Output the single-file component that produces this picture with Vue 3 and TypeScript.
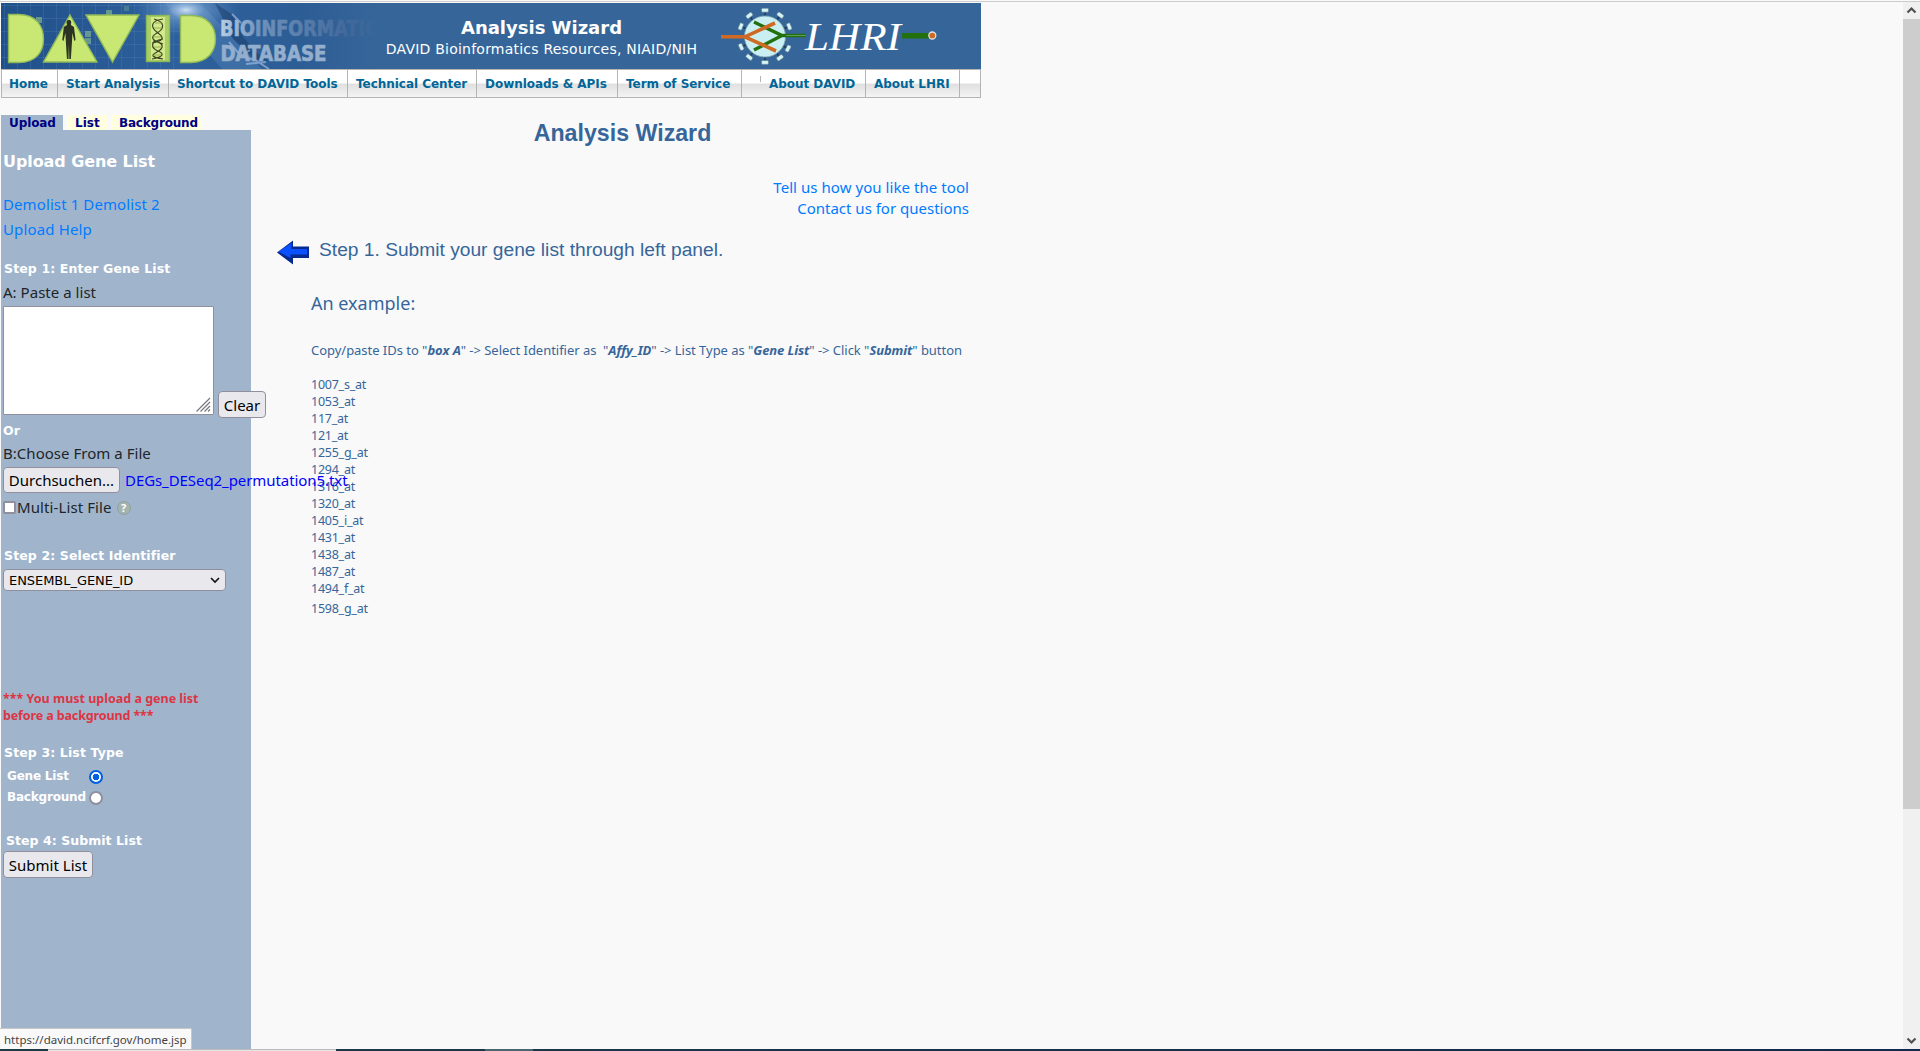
<script setup lang="ts">
import { ref } from 'vue'

const menu = [
  { label: 'Home', cls: 'm-home' },
  { label: 'Start Analysis', cls: 'm-start' },
  { label: 'Shortcut to DAVID Tools', cls: 'm-tools' },
  { label: 'Technical Center', cls: 'm-tech' },
  { label: 'Downloads & APIs', cls: 'm-down' },
  { label: 'Term of Service', cls: 'm-term' },
  { label: '', cls: 'm-gap' },
  { label: 'About DAVID', cls: 'm-david' },
  { label: 'About LHRI', cls: 'm-lhri' },
]

const affyIds = [
  '1007_s_at', '1053_at', '117_at', '121_at', '1255_g_at', '1294_at', '1316_at',
  '1320_at', '1405_i_at', '1431_at', '1438_at', '1487_at', '1494_f_at', '1598_g_at',
]

// Angles, in degrees, of the spikes around the virus emblem
const spikes = [0, 36, 68, 118, 145, 180, 217, 246, 292, 323]
const listType = ref<'gene' | 'background'>('gene')
</script>

<template>
  <div class="window">
    <div class="viewport">
      <div class="page">
        <header class="banner">
          <svg class="brand" viewBox="1 3 380 66">
            <defs>
              <linearGradient id="bg" x1="0" x2="1"><stop offset="0" stop-color="#215089" /><stop offset=".45" stop-color="#2d609c" /><stop offset=".8" stop-color="#2d5d95" /><stop offset="1" stop-color="#366699" /></linearGradient>
              <radialGradient id="glow"><stop offset="0" stop-color="#e4f0fc" stop-opacity=".95" /><stop offset=".35" stop-color="#88b0de" stop-opacity=".5" /><stop offset="1" stop-color="#6b9bd0" stop-opacity="0" /></radialGradient>
              <linearGradient id="fade" x1="0" x2="1"><stop offset="0" stop-color="#b9cde4" /><stop offset=".25" stop-color="#6f92bb" /><stop offset=".8" stop-color="#42699b" /><stop offset="1" stop-color="#38669a" /></linearGradient>
              <pattern id="grid" width="13" height="13" patternUnits="userSpaceOnUse" x="4" y="5"><path d="M13 0H0V13" fill="none" stroke="#5f8fc4" stroke-opacity=".45" /></pattern>
            </defs>
            <rect x="1" y="3" width="380" height="66" fill="url(#bg)" />
            <rect x="1" y="3" width="180" height="66" fill="url(#grid)" />
            <ellipse cx="186" cy="10" rx="52" ry="26" fill="url(#glow)" />
            <path d="M165 3L200 3L262 69L222 69Z" fill="#8db6e4" opacity=".18" />
            <path d="M215 3l18 12 10 22 14 16 12 8-14-2-22-20-10-20z" fill="#1c3e6c" opacity=".55" />
            <path d="M232 14l9 9M229 42l12 14 14 4 14 9M238 58l12-8M246 64l20-2" stroke="#b6d2f2" stroke-width="2" opacity=".55" fill="none" />
            <g fill="#8fc08f" opacity=".6"><rect x="36" y="17" width="6" height="6" /><rect x="106" y="10" width="6" height="6" /><rect x="85" y="31" width="6" height="6" /><rect x="85" y="38" width="6" height="6" /><rect x="124" y="6" width="5" height="5" opacity=".5" /></g>
            <g fill="#c8e873" stroke="#8fb858" stroke-width="1.4">
              <path d="M8.5 14.500H19C36 14.500 43.500 26 43.500 39S36 62.500 19 62.500H8.500Z" />
              <path d="M70 15L97 62H43.500Z" />
              <path d="M86 15H139L112.500 62Z" />
              <rect x="146.500" y="15.500" width="23" height="46" fill="#a9cf66" />
              <path d="M180.500 15.500H191C208 15.500 215.500 27 215.500 39S208 62.500 191 62.500H180.500Z" />
            </g>
            <g transform="translate(69.3 0) scale(.78 1) translate(-68.500 0)">
              <path d="M69 20q2 0 2 2.500l-.5 2.500 4 2 2 13-1.500 1-2.500-8-.5 8-1.500 18h-2l-.5-15-.5 15h-2l-1.500-18-.5-8-2.500 8-1.500-1 2-13 4-2-.5-2.500q0-2.500 2-2.500z" fill="#2c3322" />
            </g>
            <rect x="151" y="17" width="14" height="43" fill="#d3ea8c" />
            <path d="M163 19C149 21 151 28 158 33S163 41 152 43M154 19C166 22 164 29 157 33S151 40 163 44M163 39C149 41 151 48 158 51S163 57 152 59M153 41C165 43 164 48 157 52S152 57 163 59" fill="none" stroke="#3c4520" stroke-width="1.200" />
            <path d="M155 23h7M154 28h8M153 37h8M154 47h8M153 55h8" stroke="#8ea04a" stroke-width=".8" />
            <text x="220" y="36" textLength="158" lengthAdjust="spacingAndGlyphs" class="deco" fill="url(#fade)" stroke="url(#fade)">BIOINFORMATIC</text>
            <text x="220.500" y="61" textLength="106" lengthAdjust="spacingAndGlyphs" class="deco" fill="#94aecd" stroke="#94aecd">DATABASE</text>
          </svg>
          <div class="banner-title">
            <strong>Analysis Wizard</strong>
            <span class="sub">DAVID Bioinformatics Resources, NIAID/NIH</span>
          </div>
          <svg class="lhri" viewBox="702 3 279 66">
            <g v-for="a in spikes" :key="a" :transform="`rotate(${a} 765 36.300)`">
              <path d="M765 15.500V11" stroke="#1f3a55" stroke-width="1.600" />
              <rect x="761.500" y="8.200" width="7" height="4" rx="1.200" fill="#d3f3f3" stroke="#55758f" stroke-width=".6" />
            </g>
            <circle cx="765" cy="36.500" r="20.500" fill="#c9eff2" stroke="#7fa3b5" stroke-width=".8" />
            <g fill="none" stroke-width="3.400">
              <path d="M806 35.500H782L754 22M782 35.500L754 50" stroke="#23700f" />
              <path d="M721 36.800H745L775 23M745 36.800L776 51" stroke="#cf6a22" stroke-width="3.600" />
              <path d="M786 35.500H806" stroke="#5c9a55" stroke-width="1" />
            </g>
            <text x="805" y="49.500" textLength="96" lengthAdjust="spacingAndGlyphs" class="serif">LHRI</text>
            <rect x="902" y="33" width="28" height="5.500" fill="#23700f" />
            <circle cx="932.300" cy="35.500" r="3.500" fill="#cf6a22" stroke="#dfe3e4" stroke-width="1.300" />
          </svg>
        </header>

        <nav class="menu">
          <a v-for="m in menu" :key="m.cls" :class="m.cls">{{ m.label }}</a>
        </nav>

        <div class="columns">
          <aside class="side">
            <div class="tabs">
              <a class="on">Upload</a>
              <a>List</a>
              <a class="bgtab">Background</a>
            </div>
            <div class="panel">
              <h2>Upload Gene List</h2>
              <div class="links">
                <div><a>Demolist 1 Demolist 2</a></div>
                <div><a class="help">Upload Help</a></div>
              </div>
              <h3 class="s1">Step 1: Enter Gene List</h3>
              <label class="la">A: Paste a list</label>
              <div class="paste">
                <div class="area">
                  <svg width="15" height="15" viewBox="0 0 15 15"><path d="M.5 14.500L14 1M4.500 14.500L14 5M8.500 14.500L14 9M12 14.500L14 12.500" stroke="#77767c" stroke-width="1.200" /></svg>
                </div>
                <button class="clear">Clear</button>
              </div>
              <div class="or">Or</div>
              <label class="lb">B:Choose From a File</label>
              <div class="file">
                <button class="browse">Durchsuchen...</button>
                <span class="fname">DEGs_DESeq2_permutation5.txt</span>
              </div>
              <div class="multi">
                <i class="check"></i><span>Multi-List File</span><i class="q">?</i>
              </div>
              <h3 class="s2">Step 2: Select Identifier</h3>
              <div class="select">
                <span>ENSEMBL_GENE_ID</span>
                <svg width="10" height="7" viewBox="0 0 10 7"><path d="M1 1L5 5L9 1" fill="none" stroke="#111" stroke-width="1.600" /></svg>
              </div>
              <div class="warn">
                <div>*** You must upload a gene list</div>
                <div class="w2">before a background ***</div>
              </div>
              <h3 class="s3">Step 3: List Type</h3>
              <div class="radio first"><span>Gene List</span><i :class="{ sel: listType === 'gene' }"></i></div>
              <div class="radio"><span>Background</span><i :class="{ sel: listType === 'background' }"></i></div>
              <h3 class="s4">Step 4: Submit List</h3>
              <button class="submit">Submit List</button>
            </div>
          </aside>

          <main class="main">
            <h1>Analysis Wizard</h1>
            <div class="contact">
              <a class="c1">Tell us how you like the tool</a>
              <a>Contact us for questions</a>
            </div>
            <div class="step">
              <svg width="33" height="25" viewBox="0 0 33 25">
                <path d="M0 12.500L16 0.500V6.500H32V18H16V24.500Z" fill="#062a8e" />
                <path d="M1.500 11.500L14.500 3V9H30V14.500H13.500V18Z" fill="#0b50ff" />
              </svg>
              <span>Step 1. Submit your gene list through left panel.</span>
            </div>
            <div class="example">An example:</div>
            <p class="how">Copy/paste IDs to "<b>box A</b>" -&gt; Select Identifier as &nbsp;"<b>Affy_ID</b>" -&gt; List Type as "<b>Gene List</b>" -&gt; Click "<b>Submit</b>" button</p>
            <ul class="ids">
              <li v-for="id in affyIds" :key="id">{{ id }}</li>
            </ul>
          </main>
        </div>
      </div>

      <div class="scroll">
        <svg width="17" height="17" viewBox="0 0 17 17"><path d="M4.500 10.500L8.500 6.500L12.500 10.500" fill="none" stroke="#505050" stroke-width="2.200" /></svg>
        <div class="thumb"></div>
        <svg class="down" width="17" height="17" viewBox="0 0 17 17"><path d="M4.500 6.500L8.500 10.500L12.500 6.500" fill="none" stroke="#505050" stroke-width="2.200" /></svg>
      </div>
      <div class="status">https://david.ncifcrf.gov/home.jsp</div>
    </div>
    <div class="taskbar"><i class="task-a"></i><i class="task-b"></i></div>
  </div>
</template>

<style>
body { margin: 0; background: #f9f9f9; overflow: hidden; }
</style>

<style scoped>
.window {
  --ui: "Noto Sans", "Open Sans", sans-serif;
  --verdana: "DejaVu Sans", sans-serif;
  width: 1920px; height: 1051px; display: flex; flex-direction: column;
  box-sizing: border-box; padding-top: 1px; background: #f9f9f9; overflow: hidden;
  font: 15px var(--ui); color: #212529; white-space: nowrap;
}
.window * { box-sizing: border-box; }
h1, h2, h3, p, ul { margin: 0; padding: 0; }
.viewport { height: 1048px; display: flex; border-top: 1px solid #ccc; position: relative; }
.page { width: 1903px; padding: 1px 0 0 1px; display: flex; flex-direction: column; }
.banner { width: 980px; height: 66px; display: flex; background: #366699; }
.banner svg { display: block; flex: none; }
.brand { width: 380px; height: 66px; }
.lhri { width: 279px; height: 66px; }
.deco { font: bold 22px "DejaVu Sans Condensed", "DejaVu Sans", sans-serif; stroke-width: .7px; }
.serif { font: italic 41px "Liberation Serif", serif; fill: #fff; }
.banner-title { width: 321px; color: #fff; font-family: var(--verdana); text-align: center; padding-top: 13px; }
.banner-title strong { display: block; font-size: 18px; line-height: 23px; }
.sub { display: block; font-size: 14px; line-height: 20px; letter-spacing: .22px; }

.menu { width: 980px; height: 29px; display: flex; border: 1px solid #b4b4b4;
  background: linear-gradient(#fff 0 13px, #e0e0e0 14px, #e9e9e9 20px, #f4f4f4 27px); }
.menu a { font: bold 12px/28px var(--verdana); letter-spacing: -.04px; color: #069; padding-left: 8px; border-right: 1px solid #b4b4b4; position: relative; height: 27px; }
.menu .m-home { width: 56px; padding-left: 7px; }
.m-start { width: 111px; } .m-tools { width: 179px; } .m-tech { width: 129px; }
.m-down { width: 141px; } .m-term { width: 124px; }
.menu .m-gap { width: 19px; border: 0; }
.m-gap::after { content: ""; position: absolute; right: 0; top: 6px; width: 1px; height: 6px; background: #b4b4b4; }
.m-david { width: 105px; } .m-lhri { width: 94px; }

.columns { display: flex; padding-top: 17px; }
.side { width: 250px; }
.tabs { display: flex; gap: 4px; height: 15px; }
.tabs a { background: #ffffe0; color: #000080; font: bold 12px/17px var(--verdana); padding-left: 8px; width: 40px; }
.tabs a.on { background: #a0b5cc; width: 62px; letter-spacing: -.1px; }
.tabs .bgtab { width: 90px; letter-spacing: -.2px; }
.panel { background: #a0b5cc; height: 919px; padding: 20px 0 0 2px; }
h2 { font: bold 16px/24px var(--verdana); letter-spacing: -.08px; color: #fff; }
.links { padding-top: 18px; color: #007bff; letter-spacing: .1px; }
.links div { height: 25px; line-height: 25px; }
.links .help { letter-spacing: .15px; }
h3 { font: bold 12.500px/20px var(--verdana); letter-spacing: .13px; color: #fff; padding-left: 1px; }
.s1 { margin-top: 17px; }
label { display: block; height: 24px; line-height: 24px; letter-spacing: .03px; }
.la { margin-top: 1px; }
.paste { display: flex; align-items: flex-end; gap: 4px; height: 112px; margin-top: 2px; }
.area { width: 211px; height: 109px; margin-bottom: 3px; flex: none; background: #fff; border: 1px solid #8f8f9d; border-radius: 1px; display: flex; align-items: flex-end; justify-content: flex-end; padding: 2px; }
button { font: 15px/20px var(--ui); background: #e9e9ed; color: #000; border: 1px solid #8f8f9d; border-radius: 4px; padding: 0; text-align: center; flex: none; display: block; }
.clear { width: 48px; height: 27px; }
.or { font: bold 12.500px/20px var(--verdana); color: #fff; margin-top: 3px; }
.lb { margin-top: 0; }
.file { display: flex; align-items: center; gap: 5px; margin-top: 2px; }
.browse { width: 117px; height: 26px; }
.fname { color: #00f; position: relative; z-index: 2; letter-spacing: -.07px; }
.multi { display: flex; align-items: center; height: 24px; margin-top: 2px; letter-spacing: .1px; }
.check { width: 13px; height: 13px; border: 2px solid #8f8f9d; border-radius: 2px; background: #fff; margin-right: 1px; }
.q { width: 14px; height: 14px; border-radius: 50%; background: #a3b3ae; border: 1px solid #8f9f9f; color: #fff; font: bold 11px/12px var(--ui); text-align: center; margin-left: 5px; position: relative; top: 1px; }
.s2 { margin-top: 27px; }
.select { width: 223px; height: 22px; margin-top: 3px; border: 1px solid #8f8f9d; border-radius: 4px; background: #e9e9ed; color: #000; font: 13px/20px var(--verdana); letter-spacing: -.05px; padding: 0 5px 0 5px; display: flex; justify-content: space-between; align-items: center; }
.select span { line-height: 19px; }
.warn { margin-top: 99px; color: #dc3545; font: bold 12.500px/17px var(--ui); }
.w2 { letter-spacing: -.12px; }
.s3 { margin-top: 19px; }
.radio { height: 21px; display: flex; align-items: center; padding-left: 4px; font: bold 12px/21px var(--verdana); letter-spacing: -.2px; color: #fff; }
.radio.first { margin-top: 3px; }
.radio span { width: 82px; }
.radio i { width: 14px; height: 14px; border-radius: 50%; border: 2px solid #8f8f9d; background: #fff; }
.radio i.sel { border-color: #0060df; background: radial-gradient(circle, #0060df 3px, #fff 3.600px); }
.s4 { margin-top: 23px; padding-left: 3px; letter-spacing: .05px; }
.submit { width: 90px; height: 27px; }

.main { width: 730px; color: #366699; }
h1 { font: bold 23.200px/30px "Liberation Sans", sans-serif; text-align: center; padding: 3px 0 0 13px; }
.contact { display: flex; flex-direction: column; align-items: flex-end; padding: 29px 12px 0 0; color: #007bff; }
.contact a { height: 21px; line-height: 21px; }
.c1 { letter-spacing: .06px; }
.step { display: flex; margin: 16px 0 0 26px; gap: 9px; font: 19.200px/30px "Liberation Sans", sans-serif; }
.step svg { margin-top: 5px; }
.example { margin: 24px 0 0 60px; font-size: 18px; line-height: 28px; }
.how { margin: 23px 0 0 60px; font-size: 13px; line-height: 20px; letter-spacing: -.03px; }
.how b { font-style: italic; letter-spacing: -.1px; }
.ids { list-style: none; margin: 16px 0 0 60px; font-size: 12.500px; line-height: 17px; letter-spacing: -.25px; }
.ids li:last-child { margin-top: 3px; }

.scroll { width: 17px; height: 1047px; background: #f0f0f0; position: absolute; right: 0; top: 0; display: flex; flex-direction: column; }
.thumb { height: 790px; background: #cdcdcd; }
.down { margin-top: auto; }
.status { position: absolute; left: 0; bottom: 0; width: 192px; height: 21px; background: #f9f9f9; border: 1px solid #c8c8c8; border-left: 0; border-bottom: 0; border-top-right-radius: 2px; font-size: 11.500px; line-height: 21px; padding-left: 4px; color: #444; }
.taskbar { height: 2px; background: linear-gradient(90deg, #1f3a46, #14294b); display: flex; }
.task-a { margin-left: 48px; width: 288px; background: #e6e6e6; border-top: 1px solid #bbb; }
.task-b { margin-left: 149px; width: 48px; background: #4c6670; }
</style>
